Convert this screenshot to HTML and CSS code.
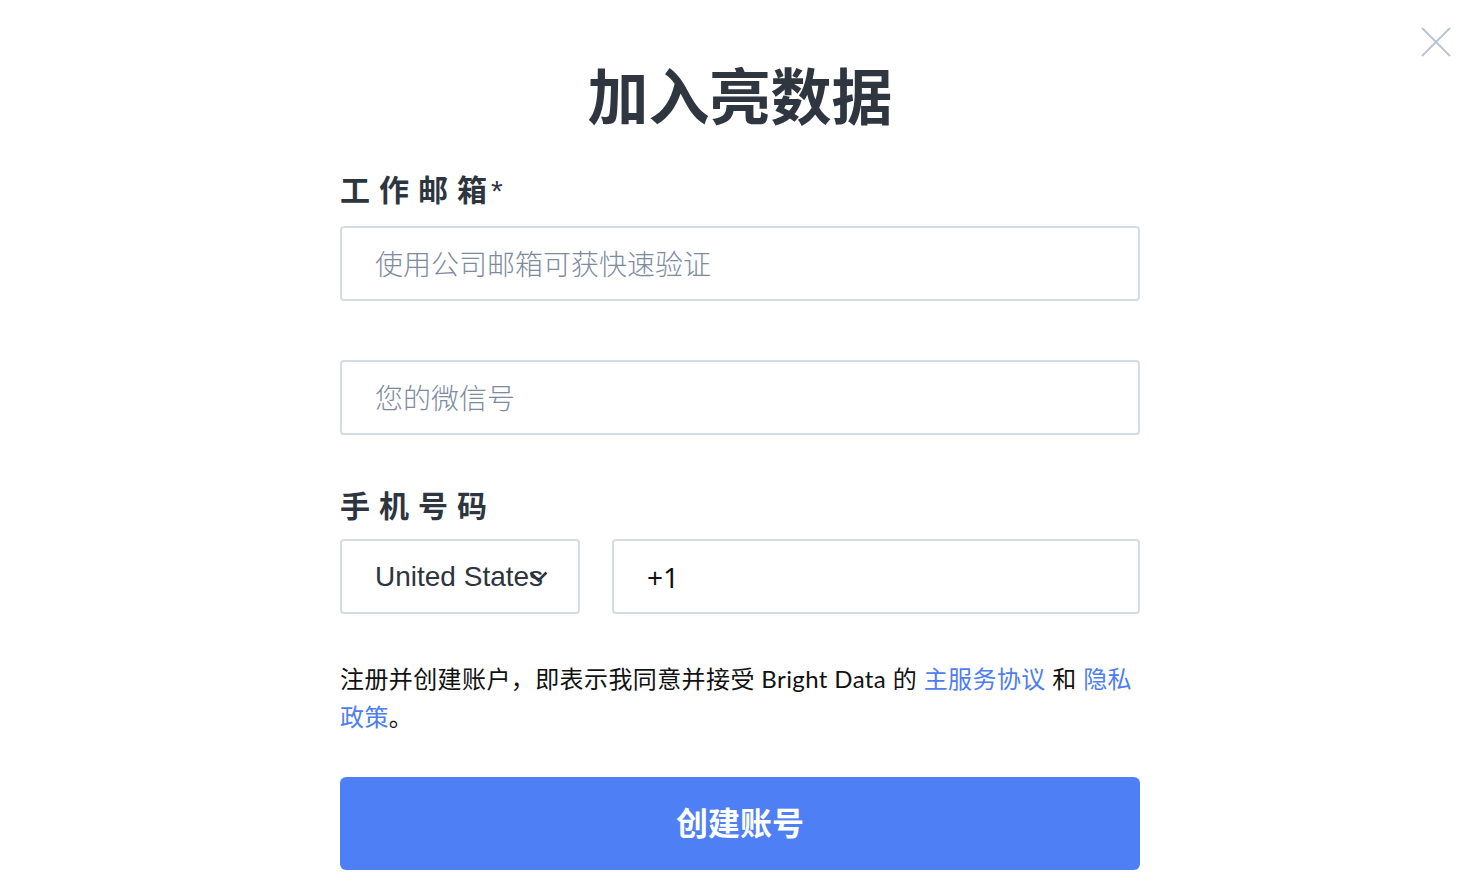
FILE: index.html
```html
<!DOCTYPE html>
<html lang="zh-CN">
<head>
<meta charset="utf-8">
<title>加入亮数据</title>
<link rel="stylesheet" href="styles.css">
</head>
<body>
<button class="close" aria-label="关闭">
  <svg width="30" height="30" viewBox="0 0 30 30"><path d="M1 1 L29 29 M29 1 L1 29" stroke="#bac4d2" stroke-width="2" fill="none"/></svg>
</button>
<main class="form">
  <h1 class="title">加入亮数据</h1>
  <label class="label">工作邮箱<span class="star">*</span></label>
  <input class="field" type="email" placeholder="使用公司邮箱可获快速验证">
  <input class="field field-gap" type="text" placeholder="您的微信号">
  <label class="label label-phone">手机号码</label>
  <div class="phone-row">
    <div class="select">
      <span class="select-text">United States</span>
      <svg class="chevron" width="19" height="13" viewBox="0 0 19 13"><polyline points="1.5,2.5 9.5,10.5 17.5,2.5" fill="none" stroke="#2c3440" stroke-width="2.5"/></svg>
    </div>
    <input class="field phone" type="text" value="+1">
  </div>
  <p class="terms">注册并创建账户，即表示我同意并接受 Bright Data 的 <a href="#">主服务协议</a> 和 <a href="#">隐私政策</a>。</p>
  <button class="submit">创建账号</button>
</main>
</body>
</html>
```

FILE: styles.css
```css
* { box-sizing: border-box; }
html, body { margin: 0; padding: 0; background: #fff; }
body {
  font-family: "Noto Sans", "Noto Sans CJK SC", sans-serif;
  color: #111;
  position: relative;
  min-height: 888px;
}
.close {
  position: absolute;
  left: 1421px;
  top: 27px;
  width: 30px;
  height: 30px;
  padding: 0;
  border: 0;
  background: none;
  cursor: pointer;
}
.close svg { display: block; }
.form {
  width: 800px;
  margin: 0 auto;
  padding-top: 54px;
  display: flex;
  flex-direction: column;
}
.title {
  margin: 0;
  font-family: "Noto Sans CJK SC", sans-serif;
  font-size: 61px;
  line-height: 80px;
  font-weight: 700;
  color: #2f3640;
  text-align: center;
}
.label {
  margin-top: 34px;
  font-family: "Noto Sans CJK SC", sans-serif;
  font-size: 30px;
  line-height: 40px;
  font-weight: 700;
  letter-spacing: 9px;
  color: #2d3540;
}
.label .star {
  letter-spacing: 0;
  font-family: "Liberation Sans", sans-serif;
  font-weight: 400;
  font-size: 30px;
  margin-left: -5px;
}
.label-phone { margin-top: 49px; }
.field {
  display: block;
  width: 100%;
  height: 75px;
  margin-top: 15px;
  padding: 0 33px;
  border: 2px solid #d4dce5;
  border-radius: 4px;
  font-family: "Noto Sans", "Noto Sans CJK SC", sans-serif;
  font-size: 28px;
  color: #111;
  background: #fff;
  outline: none;
}
.field::placeholder {
  font-family: "Noto Sans CJK SC", sans-serif;
  color: #7d8b9f;
  font-weight: 300;
}
.field-gap { margin-top: 59px; }
.phone-row {
  display: flex;
  gap: 32px;
  margin-top: 15px;
}
.select {
  position: relative;
  width: 240px;
  height: 75px;
  flex: none;
  border: 2px solid #d4dce5;
  border-radius: 4px;
  display: flex;
  align-items: center;
  padding-left: 33px;
}
.select-text {
  font-family: "Liberation Sans", Arial, sans-serif;
  font-size: 28px;
  color: #2c3440;
}
.chevron {
  position: absolute;
  left: 187px;
  top: 29px;
}
.phone { margin-top: 0; flex: 1; }
.terms {
  margin: 46px 0 0;
  font-family: Lato, "Noto Sans CJK SC", sans-serif;
  font-size: 24px;
  letter-spacing: 0.4px;
  line-height: 38px;
  color: #111;
}
.terms a { color: #4d7df0; text-decoration: none; }
.submit {
  margin-top: 41px;
  height: 93px;
  width: 100%;
  padding: 0 0 6px;
  border: 0;
  border-radius: 6px;
  background: #4f7ff4;
  color: #fff;
  font-family: "Noto Sans CJK SC", sans-serif;
  font-size: 32px;
  font-weight: 700;
  cursor: pointer;
}
```
